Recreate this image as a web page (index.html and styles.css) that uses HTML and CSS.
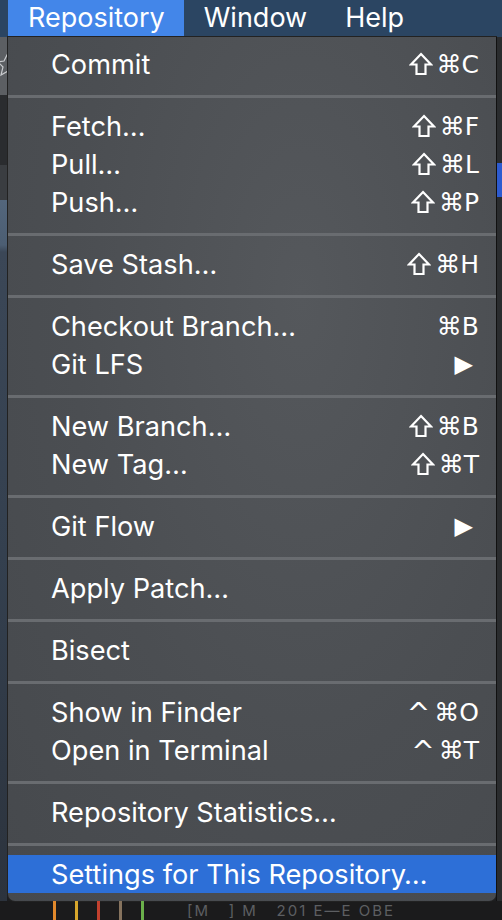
FILE: index.html
```html
<!DOCTYPE html>
<html lang="en">
<head>
  <meta charset="UTF-8" />
  <meta name="viewport" content="width=device-width, initial-scale=1" />
  <title>Repository menu</title>
  <link rel="stylesheet" href="styles.css">
</head>
<body>

  <div class="menubar">
    <span class="menubar-item active">Repository</span>
    <span class="menubar-item">Window</span>
    <span class="menubar-item">Help</span>
  </div>

  <div class="stage">
    <div class="side-left">
      <svg class="star" width="8" height="30" viewBox="0 0 8 30">
        <path d="M8 4 L4 12 L-2 13 L3 18 L1 26 L8 22" fill="none" stroke="#c9cbce" stroke-width="1.2"/>
      </svg>
    </div>

    <div class="menu">
      <div class="item"><span>Commit</span><span class="keys"><svg class="shift" viewBox="0 0 24 24"><path d="M12 2 L22 12.5 L16.5 12.5 L16.5 22 L7.5 22 L7.5 12.5 L2 12.5 Z" fill="none" stroke="#fff" stroke-width="2.2"/></svg>⌘C</span></div>
      <div class="sep"></div>
      <div class="item"><span>Fetch…</span><span class="keys"><svg class="shift" viewBox="0 0 24 24"><path d="M12 2 L22 12.5 L16.5 12.5 L16.5 22 L7.5 22 L7.5 12.5 L2 12.5 Z" fill="none" stroke="#fff" stroke-width="2.2"/></svg>⌘F</span></div>
      <div class="item"><span>Pull…</span><span class="keys"><svg class="shift" viewBox="0 0 24 24"><path d="M12 2 L22 12.5 L16.5 12.5 L16.5 22 L7.5 22 L7.5 12.5 L2 12.5 Z" fill="none" stroke="#fff" stroke-width="2.2"/></svg>⌘L</span></div>
      <div class="item"><span>Push…</span><span class="keys"><svg class="shift" viewBox="0 0 24 24"><path d="M12 2 L22 12.5 L16.5 12.5 L16.5 22 L7.5 22 L7.5 12.5 L2 12.5 Z" fill="none" stroke="#fff" stroke-width="2.2"/></svg>⌘P</span></div>
      <div class="sep"></div>
      <div class="item"><span>Save Stash…</span><span class="keys"><svg class="shift" viewBox="0 0 24 24"><path d="M12 2 L22 12.5 L16.5 12.5 L16.5 22 L7.5 22 L7.5 12.5 L2 12.5 Z" fill="none" stroke="#fff" stroke-width="2.2"/></svg>⌘H</span></div>
      <div class="sep"></div>
      <div class="item"><span>Checkout Branch…</span><span class="keys">⌘B</span></div>
      <div class="item"><span>Git LFS</span><span class="arrow">▶</span></div>
      <div class="sep"></div>
      <div class="item"><span>New Branch…</span><span class="keys"><svg class="shift" viewBox="0 0 24 24"><path d="M12 2 L22 12.5 L16.5 12.5 L16.5 22 L7.5 22 L7.5 12.5 L2 12.5 Z" fill="none" stroke="#fff" stroke-width="2.2"/></svg>⌘B</span></div>
      <div class="item"><span>New Tag…</span><span class="keys"><svg class="shift" viewBox="0 0 24 24"><path d="M12 2 L22 12.5 L16.5 12.5 L16.5 22 L7.5 22 L7.5 12.5 L2 12.5 Z" fill="none" stroke="#fff" stroke-width="2.2"/></svg>⌘T</span></div>
      <div class="sep"></div>
      <div class="item"><span>Git Flow</span><span class="arrow">▶</span></div>
      <div class="sep"></div>
      <div class="item"><span>Apply Patch…</span></div>
      <div class="sep"></div>
      <div class="item"><span>Bisect</span></div>
      <div class="sep"></div>
      <div class="item"><span>Show in Finder</span><span class="keys"><span class="ctrl">^</span>⌘O</span></div>
      <div class="item"><span>Open in Terminal</span><span class="keys"><span class="ctrl">^</span>⌘T</span></div>
      <div class="sep"></div>
      <div class="item"><span>Repository Statistics…</span></div>
      <div class="sep"></div>
      <div class="item selected"><span>Settings for This Repository…</span></div>
    </div>

    <div class="side-right"></div>
  </div>

  <div class="bottom">
    <div class="graph">
      <span class="lane orange"></span>
      <span class="lane yellow"></span>
      <span class="lane red"></span>
      <span class="lane brown"></span>
      <span class="lane green"></span>
    </div>
    <div class="commit-text">[M&nbsp;&nbsp;&nbsp;] M&nbsp;&nbsp;&nbsp;201 E—E OBE</div>
  </div>

</body>
</html>
```

FILE: styles.css
```css
body { margin: 0; background: #1d1e20; font-family: Inter, "Noto Sans", sans-serif; color: #fff; overflow: hidden; }

.menubar { height: 37px; background: #2b4562; display: flex; padding-left: 8px; }
.menubar-item { font-size: 27px; line-height: 35px; padding: 0 18px 0 20px; color: #fff; }
.menubar-item.active { background: #4386e9; padding-right: 19px; }

.stage { display: flex; height: 864px; }
.side-left { width: 7px; border-right: 1px solid #1c1d1f;
  background: linear-gradient(#5c5f63 0, #5c5f63 58px, #2a2c2f 58px, #2a2c2f 128px, #3a3d41 128px, #3a3d41 163px, #53667c 163px, #4c5e73 208px, #3b4757 215px, #34404f 60%, #2c333d 100%); }
.star { display: block; margin-top: 12px; }
.side-right { width: 5px; background: linear-gradient(#2a2c2e 0, #2a2c2e 126px, #2d5bd0 126px, #2d5bd0 160px, #2a2c2e 160px); border-left: 1px solid #111; }

.menu { width: 489px; padding: 8px 0; box-sizing: border-box; height: 864px;
  background: radial-gradient(ellipse at 60% 30%, #55585c 0%, #4b4e52 55%, #46494d 100%);
  border-radius: 0 0 7px 7px; box-shadow: 0 0 0 1px #222; }
.item { display: flex; justify-content: space-between; align-items: center; height: 38px; padding: 0 17px 0 43px; font-size: 27.2px; }
.item.selected { background: #2d6fd7; }
.keys { display: flex; align-items: center; font-family: "DejaVu Sans", sans-serif; font-size: 25px; }
.shift { width: 24px; height: 24px; margin-right: 4px; }
.ctrl { font-size: 28px; margin-right: 4px; position: relative; top: 1px; }
.arrow { font-family: "DejaVu Sans", sans-serif; font-size: 24px; padding-right: 6px; }
.sep { height: 3px; margin: 12px 0 9px; background: #696c70; }

.bottom { display: flex; height: 19px; background: #1b1b1c; padding-left: 35px; }
.graph { display: flex; gap: 19px; padding-left: 18px; width: 110px; }
.lane { width: 3px; height: 19px; }
.orange { background: #e2892c; }
.yellow { background: #d7a62c; }
.red { background: #c2402e; }
.brown { background: #86735e; }
.green { background: #6bb04b; }
.commit-text { color: #5d5f62; font-size: 15px; line-height: 19px; white-space: nowrap; padding-left: 24px; letter-spacing: 2px; }
```
